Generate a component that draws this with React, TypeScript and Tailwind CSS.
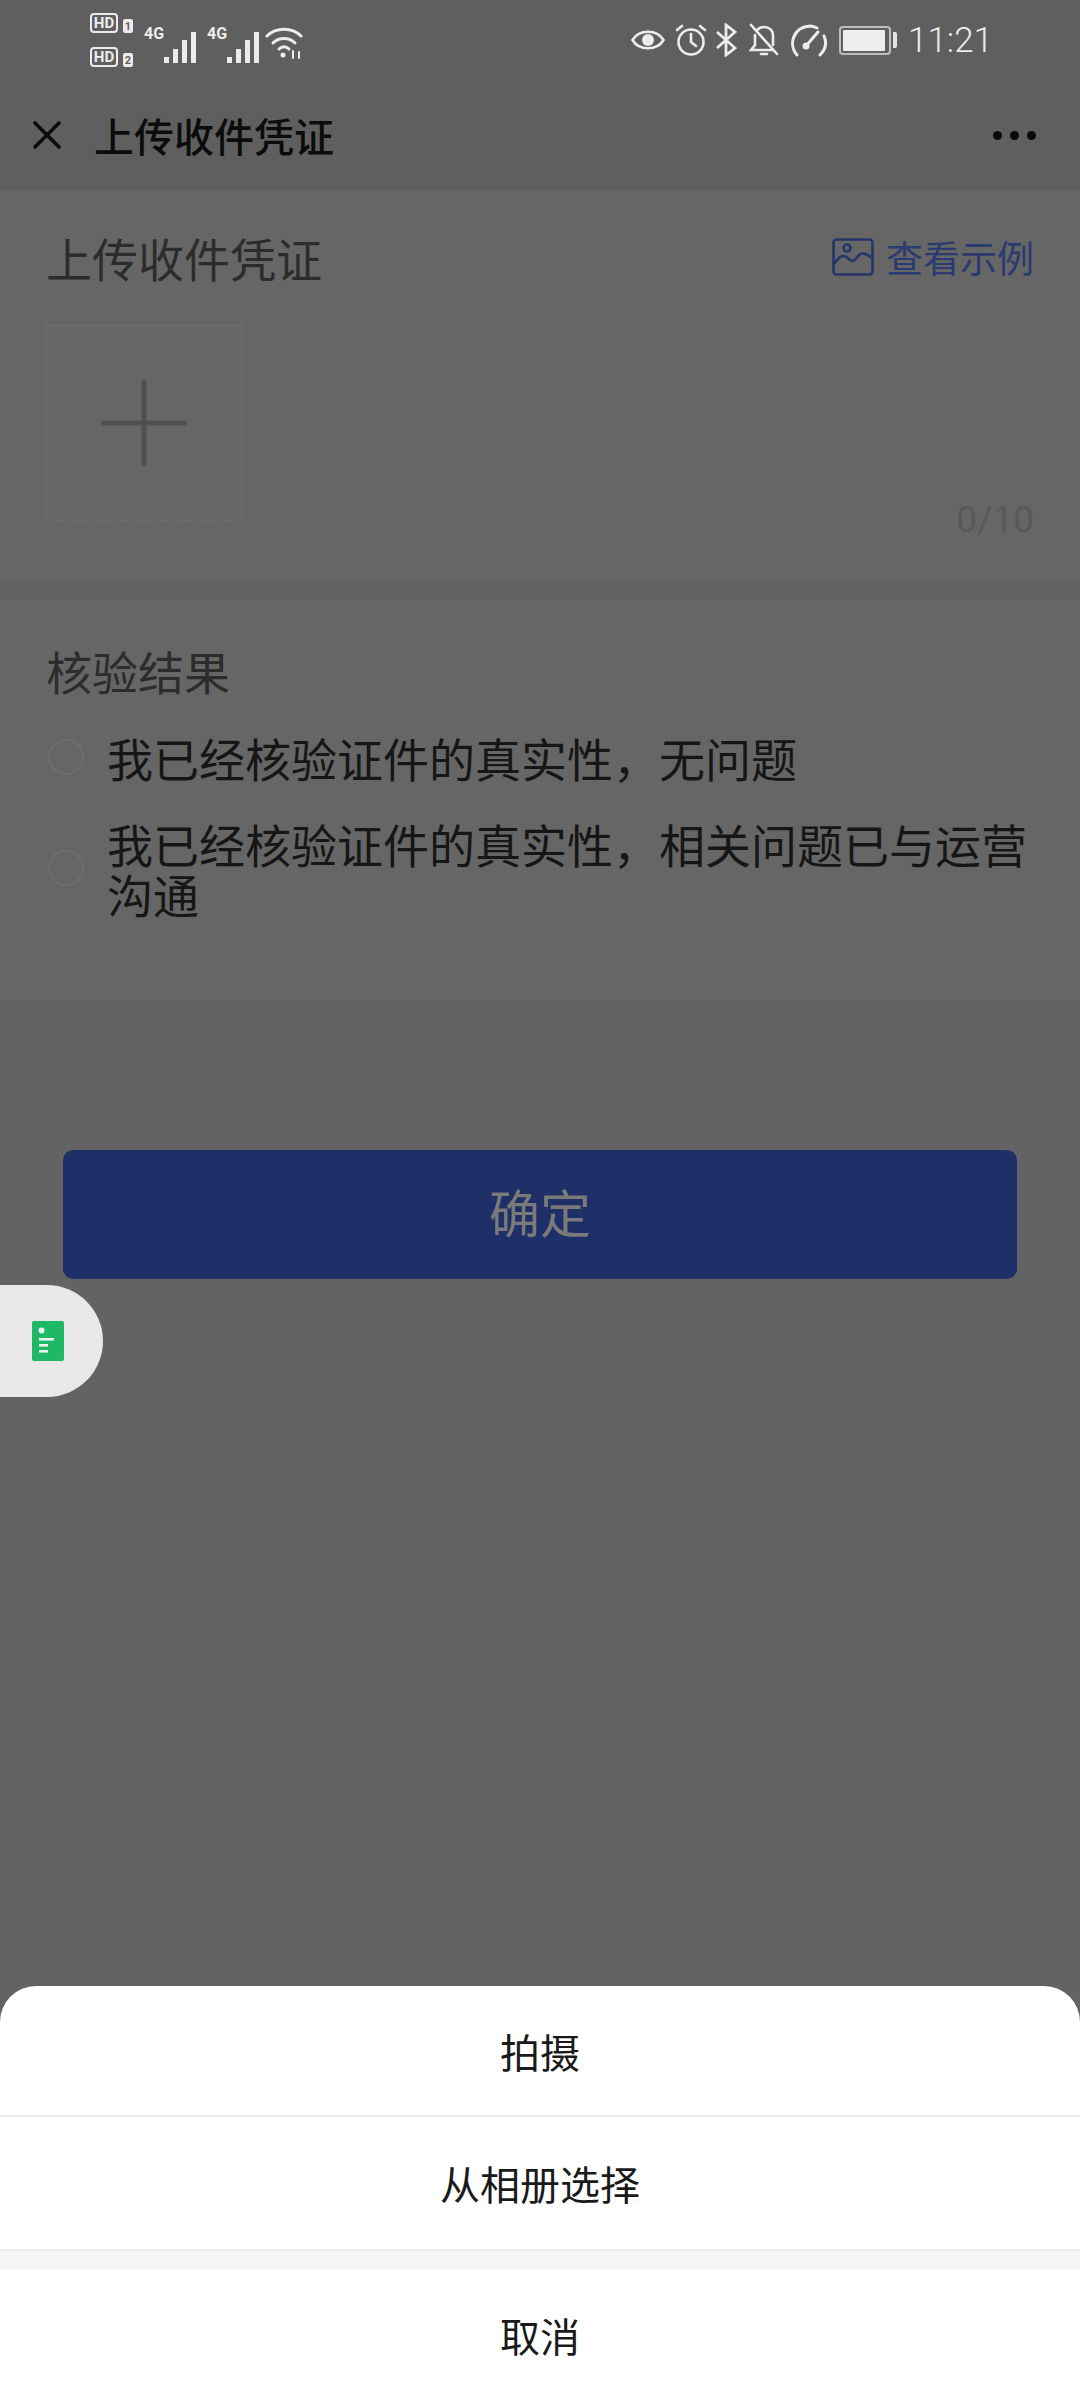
import { X, Plus } from 'lucide-react'

const cjk = "font-['Noto_Sans_CJK_SC','Noto_Sans',sans-serif]"

function Bars({ className = '' }: { className?: string }) {
  return (
    <svg width="34" height="32" viewBox="0 0 34 32" className={className} fill="#ececec">
      <rect x="0" y="26" width="5" height="6" />
      <rect x="9" y="18" width="5" height="14" />
      <rect x="18" y="9" width="5" height="23" />
      <rect x="27" y="1" width="5" height="31" />
    </svg>
  )
}

function Wifi() {
  return (
    <svg width="38" height="34" viewBox="0 0 38 34" fill="none" stroke="#ececec" strokeWidth="3" strokeLinecap="round">
      <path d="M2 11 C11 2 27 2 36 11" />
      <path d="M8 18 C14 12 24 12 30 18" />
      <path d="M14 24 C17 21 21 21 24 24" />
      <circle cx="18" cy="30" r="2.5" fill="#ececec" stroke="none" />
      <path d="M28 26 L28 33 M34 27 L34 33" strokeWidth="2" />
    </svg>
  )
}

function HdRow({ n }: { n: string }) {
  return (
    <div className="flex items-end gap-[5px]">
      <span className="flex h-[20px] w-[28px] items-center justify-center rounded-[4px] border-2 border-[#ececec] font-['Roboto',sans-serif] text-[15px] leading-none font-bold text-[#ececec]">
        HD
      </span>
      <span className="flex h-[14px] w-[10px] items-center justify-center rounded-[2px] bg-[#ececec] font-['Roboto',sans-serif] text-[11px] leading-none font-bold text-[#5f5f5f]">
        {n}
      </span>
    </div>
  )
}

function StatusIcons() {
  return (
    <div className="flex items-center">
      {/* eye */}
      <svg width="34" height="26" viewBox="0 0 34 26" fill="none" stroke="#ececec" strokeWidth="2.6">
        <path d="M1.5 13 C8 2 26 2 32.5 13 C26 24 8 24 1.5 13 Z" />
        <circle cx="17" cy="13" r="6" fill="#ececec" stroke="none" />
      </svg>
      {/* alarm */}
      <svg width="32" height="32" viewBox="0 0 32 32" fill="none" stroke="#ececec" strokeWidth="2.6" strokeLinecap="round" className="ml-[10px]">
        <circle cx="16" cy="18" r="12.5" />
        <path d="M16 10 V18 L21 22" />
        <path d="M2 6 L7 2 M30 6 L25 2" />
      </svg>
      {/* bluetooth */}
      <svg width="22" height="34" viewBox="0 0 22 34" fill="none" stroke="#ececec" strokeWidth="2.8" className="ml-[8px]">
        <path d="M2 9 L20 25 L11 32 V2 L20 9 L2 25" />
      </svg>
      {/* bell off */}
      <svg width="30" height="34" viewBox="0 0 30 34" fill="none" stroke="#ececec" strokeWidth="2.6" strokeLinecap="round" className="ml-[12px]">
        <path d="M24 22 V13 C24 7 20 4 15 4 C12 4 10 5 8 7" />
        <path d="M6 12 V22 L2 27 H24" />
        <path d="M12 31 H18" />
        <path d="M2 2 L28 31" />
      </svg>
      {/* gauge */}
      <svg width="38" height="34" viewBox="0 0 38 34" fill="none" stroke="#ececec" strokeWidth="3" strokeLinecap="round" className="ml-[10px]">
        <path d="M8 32 C-1 22 4 4 21 3 C24 3 26 4 28 5" />
        <path d="M35 13 C38 20 36 27 31 32" />
        <path d="M17 23 L29 9" />
        <circle cx="17" cy="23" r="3.5" fill="#ececec" stroke="none" />
      </svg>
      {/* battery */}
      <div className="ml-[12px] flex items-center gap-[2px]">
        <div className="h-[29px] w-[52px] rounded-[4px] border-2 border-[#bdbdbd] p-[2px]">
          <div className="h-full w-[42px] rounded-[1px] bg-[#eeeeee]" />
        </div>
        <div className="h-[16px] w-[4px] rounded-r-[2px] bg-[#e4e4e4]" />
      </div>
      <span className="ml-[11px] font-['Roboto',sans-serif] text-[35px] leading-none font-light text-[#ececec]">11:21</span>
    </div>
  )
}

function Radio() {
  return <div className="h-[36px] w-[36px] shrink-0 rounded-full border-2 border-[#6e6e6e]" />
}

export default function App() {
  return (
    <div className={`relative flex h-[2400px] w-[1080px] flex-col overflow-hidden bg-[#636363] ${cjk}`}>
      {/* status bar */}
      <div className="flex h-[80px] items-center justify-between bg-[#5f5f5f] pl-[90px] pr-[87px]">
        <div className="flex items-center">
          <div className="flex flex-col gap-[14px]">
            <HdRow n="1" />
            <HdRow n="2" />
          </div>
          <span className="ml-[11px] mb-[12px] font-['Roboto',sans-serif] text-[16px] font-bold text-[#ececec]">4G</span>
          <Bars className="mt-[14px]" />
          <span className="ml-[9px] mb-[12px] font-['Roboto',sans-serif] text-[16px] font-bold text-[#ececec]">4G</span>
          <Bars className="mt-[14px]" />
          <div className="ml-[4px] mt-[4px]"><Wifi /></div>
        </div>
        <StatusIcons />
      </div>

      {/* nav */}
      <div className="flex h-[110px] items-center justify-between bg-[#5f5f5f] pl-[23px] pr-[44px]">
        <div className="flex items-center gap-[23px]">
          <X size={48} strokeWidth={1.8} color="#0c0c0c" />
          <span className="text-[40px] leading-none font-medium text-[#0c0c0c]">上传收件凭证</span>
        </div>
        <div className="flex gap-[8px]">
          <div className="h-[9px] w-[9px] rounded-full bg-[#0a0a0a]" />
          <div className="h-[9px] w-[9px] rounded-full bg-[#0a0a0a]" />
          <div className="h-[9px] w-[9px] rounded-full bg-[#0a0a0a]" />
        </div>
      </div>

      {/* upload section */}
      <div className="flex h-[392px] flex-col bg-[#666666] pl-[46px] pr-[46px] pt-[41px]">
        <div className="flex items-center justify-between">
          <span className="text-[46px] leading-[52px] text-[#2c2c2c]">上传收件凭证</span>
          <div className="flex items-center gap-[12px]">
            <svg width="42" height="38" viewBox="0 0 42 38" fill="none" stroke="#26356b" strokeWidth="2.6" strokeLinejoin="round">
              <rect x="1.5" y="1.5" width="39" height="35" rx="3" />
              <circle cx="15" cy="10" r="3.5" />
              <path d="M2 26 C8 17 12 16 17 21 C20 24 22 24 26 18 C29 14 34 15 40 20" />
            </svg>
            <span className="text-[37px] leading-none text-[#2b3a70]">查看示例</span>
          </div>
        </div>
        <div className="mt-[42px] flex h-[196px] w-[196px] items-center justify-center border border-[#707070] [border-bottom-style:dashed]">
          <Plus size={140} strokeWidth={0.85} color="#505050" />
        </div>
        <div className="mt-[-21px] text-right font-['Roboto',sans-serif] text-[37px] leading-[40px] text-[#595959]">0/10</div>
      </div>

      <div className="h-[18px] bg-[#636363]" />

      {/* result section */}
      <div className="flex h-[400px] flex-col bg-[#666666] pl-[46px] pr-[46px] pt-[44px]">
        <span className="text-[46px] leading-[52px] text-[#2c2c2c]">核验结果</span>
        <div className="mt-[35px] flex items-center gap-[23px] pl-[2px]">
          <Radio />
          <span className="text-[46px] leading-[52px] text-[#161616]">我已经核验证件的真实性，无问题</span>
        </div>
        <div className="mt-[35px] flex items-center gap-[23px] pl-[2px]">
          <Radio />
          <span className="text-[46px] leading-[50px] text-[#161616]">我已经核验证件的真实性，相关问题已与运营沟通</span>
        </div>
      </div>

      {/* confirm */}
      <div className="mx-[63px] mt-[150px] flex h-[129px] items-center justify-center rounded-[10px] bg-[#1f3068] pb-[6px]">
        <span className="text-[51px] leading-none text-[#7a7a7a]">确定</span>
      </div>

      {/* action sheet */}
      <div className="mt-auto flex flex-col overflow-hidden rounded-t-[36px] bg-white text-[40px] leading-none text-[#1a1a1a]">
        <div className="flex h-[131px] items-center justify-center border-b-2 border-[#ececec]">拍摄</div>
        <div className="flex h-[132px] items-center justify-center">从相册选择</div>
        <div className="h-[21px] border-t-2 border-[#ececec] bg-[#f6f6f6]" />
        <div className="flex h-[130px] items-center justify-center">取消</div>
      </div>

      {/* floating doc button */}
      <div className="absolute left-0 top-[1285px] flex h-[112px] w-[103px] items-center rounded-r-[56px] bg-[#e8e8e8] pl-[32px]">
        <svg width="32" height="40" viewBox="0 0 32 40">
          <rect width="32" height="40" rx="2" fill="#1fb866" />
          <circle cx="9.5" cy="9.5" r="3" fill="#e8f5ee" />
          <rect x="7" y="17" width="15" height="2.6" fill="#e8f5ee" />
          <rect x="7" y="23" width="9" height="2.6" fill="#e8f5ee" />
          <rect x="7" y="29" width="9" height="2.6" fill="#e8f5ee" />
        </svg>
      </div>
    </div>
  )
}
